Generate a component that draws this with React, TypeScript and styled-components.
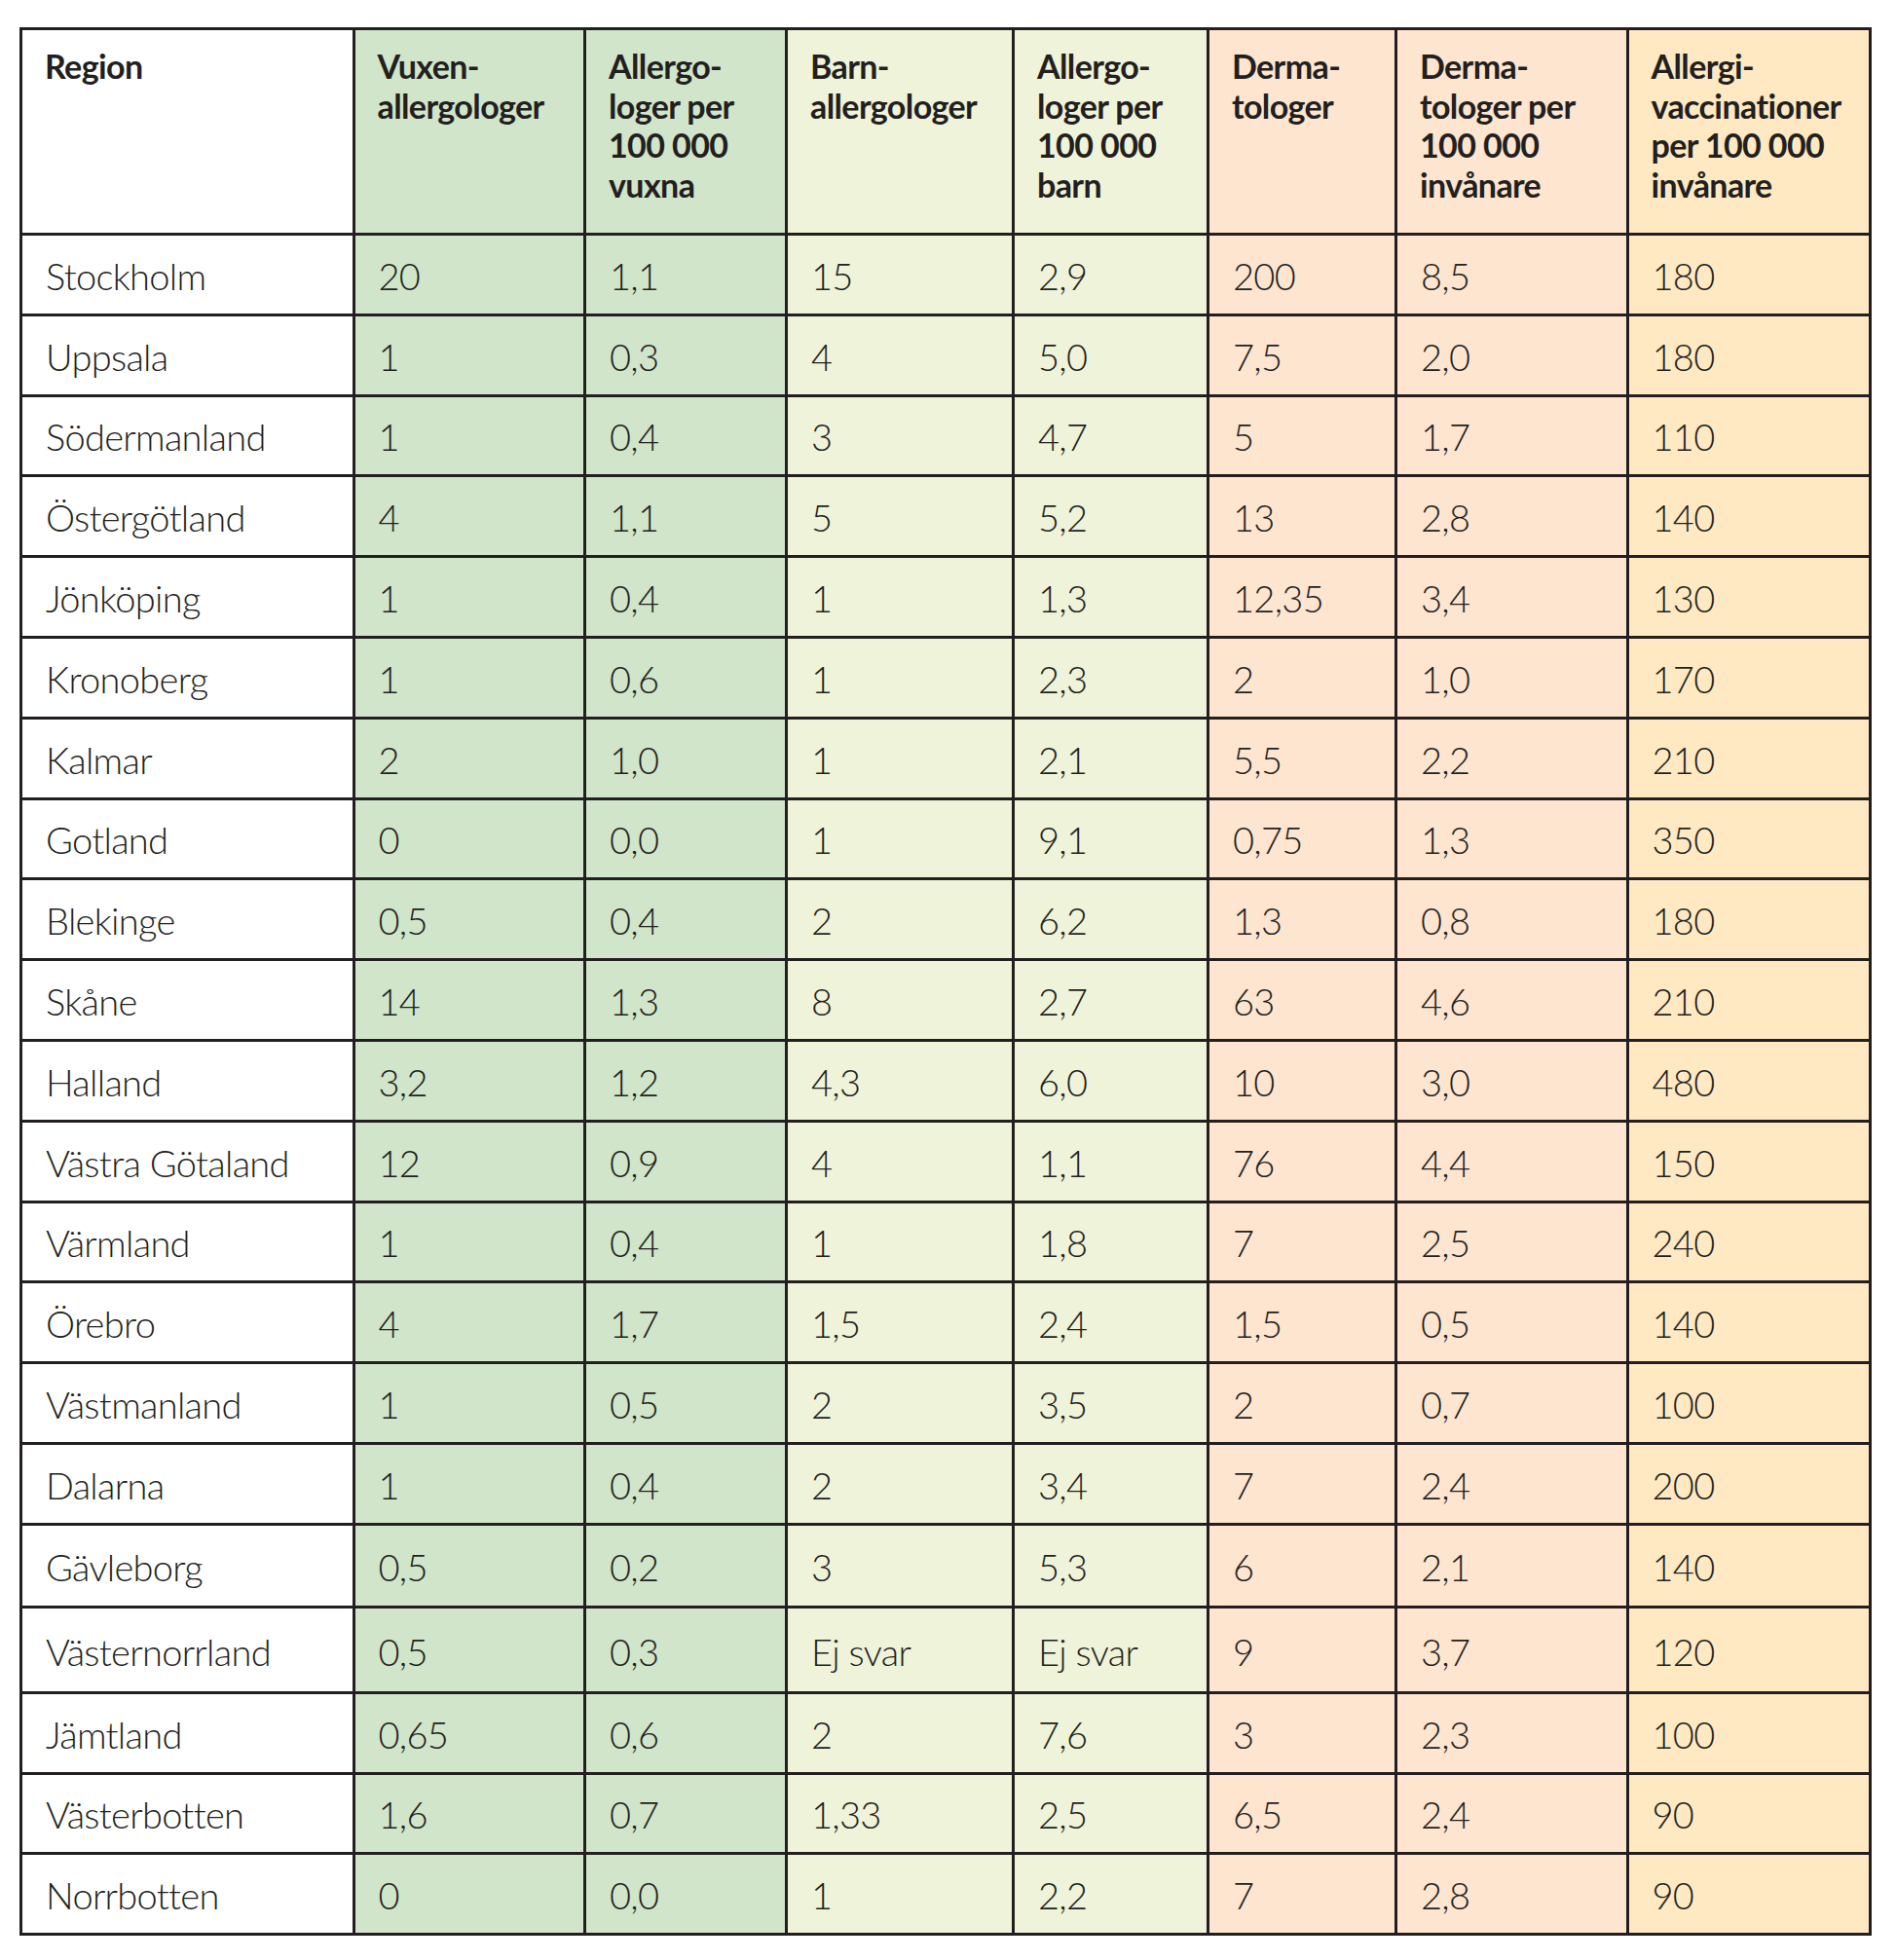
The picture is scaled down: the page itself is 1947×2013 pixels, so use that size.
import React from "react";
import styled, { createGlobalStyle } from "styled-components";

const GlobalStyle = createGlobalStyle`
  html, body {
    margin: 0;
    padding: 0;
    background: #ffffff;
  }
  body {
    font-family: Lato, "Liberation Sans", sans-serif;
    color: #231f20;
  }
`;

type Tone = "white" | "green" | "lime" | "peach" | "amber";

const toneColor: Record<Tone, string> = {
  white: "#ffffff",
  green: "#d1e5ca",
  lime: "#eff3d9",
  peach: "#fde5d0",
  amber: "#fee9c3",
};

const columnTones: Tone[] = ["white", "green", "green", "lime", "lime", "peach", "peach", "amber"];

const headers = [
  "Region",
  "Vuxen-\nallergologer",
  "Allergo-\nloger per\n100 000\nvuxna",
  "Barn-\nallergologer",
  "Allergo-\nloger per\n100 000\nbarn",
  "Derma-\ntologer",
  "Derma-\ntologer per\n100 000\ninvånare",
  "Allergi-\nvaccinationer\nper 100 000\ninvånare",
];

type Row = { cells: string[]; height?: number };

const rows: Row[] = [
  { cells: ["Stockholm", "20", "1,1", "15", "2,9", "200", "8,5", "180"] },
  { cells: ["Uppsala", "1", "0,3", "4", "5,0", "7,5", "2,0", "180"] },
  { cells: ["Södermanland", "1", "0,4", "3", "4,7", "5", "1,7", "110"] },
  { cells: ["Östergötland", "4", "1,1", "5", "5,2", "13", "2,8", "140"] },
  { cells: ["Jönköping", "1", "0,4", "1", "1,3", "12,35", "3,4", "130"] },
  { cells: ["Kronoberg", "1", "0,6", "1", "2,3", "2", "1,0", "170"] },
  { cells: ["Kalmar", "2", "1,0", "1", "2,1", "5,5", "2,2", "210"] },
  { cells: ["Gotland", "0", "0,0", "1", "9,1", "0,75", "1,3", "350"] },
  { cells: ["Blekinge", "0,5", "0,4", "2", "6,2", "1,3", "0,8", "180"] },
  { cells: ["Skåne", "14", "1,3", "8", "2,7", "63", "4,6", "210"] },
  { cells: ["Halland", "3,2", "1,2", "4,3", "6,0", "10", "3,0", "480"] },
  { cells: ["Västra Götaland", "12", "0,9", "4", "1,1", "76", "4,4", "150"] },
  { cells: ["Värmland", "1", "0,4", "1", "1,8", "7", "2,5", "240"] },
  { cells: ["Örebro", "4", "1,7", "1,5", "2,4", "1,5", "0,5", "140"] },
  { cells: ["Västmanland", "1", "0,5", "2", "3,5", "2", "0,7", "100"] },
  { cells: ["Dalarna", "1", "0,4", "2", "3,4", "7", "2,4", "200"] },
  { cells: ["Gävleborg", "0,5", "0,2", "3", "5,3", "6", "2,1", "140"], height: 82.4 },
  { cells: ["Västernorrland", "0,5", "0,3", "Ej svar", "Ej svar", "9", "3,7", "120"], height: 85 },
  { cells: ["Jämtland", "0,65", "0,6", "2", "7,6", "3", "2,3", "100"], height: 79.6 },
  { cells: ["Västerbotten", "1,6", "0,7", "1,33", "2,5", "6,5", "2,4", "90"], height: 79.2 },
  { cells: ["Norrbotten", "0", "0,0", "1", "2,2", "7", "2,8", "90"], height: 79.8 },
];

const Page = styled.div`
  padding: 28px 0 24px 20px;
`;

const Table = styled.div`
  display: grid;
  width: max-content;
  grid-template-columns: 338.5px 234.5px 204px 230px 197px 190px 234.5px 246px;
  gap: 3px;
  padding: 3px;
  background: #231f20;
`;

const HeaderCell = styled.div<{ $tone: Tone }>`
  background: ${(p) => toneColor[p.$tone]};
  height: 208px;
  box-sizing: border-box;
  padding: 17px 12px 0 23px;
  font-weight: 700;
  font-size: 34px;
  line-height: 40.5px;
  letter-spacing: -0.6px;
  white-space: pre-line;
  color: #231f20;
`;

const DataCell = styled.div<{ $tone: Tone; $h: number }>`
  background: ${(p) => toneColor[p.$tone]};
  height: ${(p) => p.$h}px;
  box-sizing: border-box;
  display: flex;
  align-items: center;
  padding: 2px 8px 0 24px;
  font-weight: 300;
  font-size: 38px;
  letter-spacing: -0.7px;
  white-space: nowrap;
  color: #231f20;
`;

export default function App() {
  return (
    <>
      <GlobalStyle />
      <Page>
        <Table>
          {headers.map((h, i) => (
            <HeaderCell key={`h${i}`} $tone={columnTones[i]}>
              {h}
            </HeaderCell>
          ))}
          {rows.map((r, ri) =>
            r.cells.map((c, ci) => (
              <DataCell key={`r${ri}c${ci}`} $tone={columnTones[ci]} $h={r.height ?? 79.8}>
                {c}
              </DataCell>
            ))
          )}
        </Table>
      </Page>
    </>
  );
}
